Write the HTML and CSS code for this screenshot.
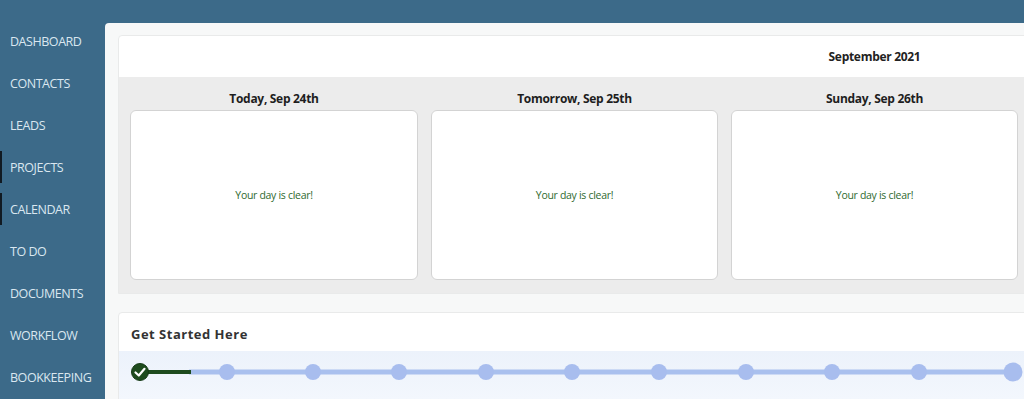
FILE: index.html
```html
<!DOCTYPE html>
<html>
<head>
<meta charset="utf-8">
<link rel="stylesheet" href="styles.css">
</head>
<body>
<div class="app">
  <nav class="sidebar">
    <a class="nav-item">DASHBOARD</a>
    <a class="nav-item">CONTACTS</a>
    <a class="nav-item">LEADS</a>
    <a class="nav-item marked">PROJECTS</a>
    <a class="nav-item marked">CALENDAR</a>
    <a class="nav-item">TO DO</a>
    <a class="nav-item">DOCUMENTS</a>
    <a class="nav-item">WORKFLOW</a>
    <a class="nav-item">BOOKKEEPING</a>
  </nav>
  <main class="main">
    <section class="cal-card">
      <div class="cal-head grid3">
        <div></div><div></div>
        <div class="month">September 2021</div>
      </div>
      <div class="cal-body">
        <div class="grid3 titles">
          <div class="day-title">Today, Sep 24th</div>
          <div class="day-title">Tomorrow, Sep 25th</div>
          <div class="day-title">Sunday, Sep 26th</div>
        </div>
        <div class="grid3">
          <div class="day-card">Your day is clear!</div>
          <div class="day-card">Your day is clear!</div>
          <div class="day-card">Your day is clear!</div>
        </div>
      </div>
    </section>
    <section class="start-card">
      <h2 class="start-title">Get Started Here</h2>
      <div class="track">
        <svg width="906" height="45" viewBox="0 0 906 45">
          <line x1="70" y1="21" x2="894" y2="21" stroke="#a9c0ee" stroke-width="5"/>
          <line x1="21" y1="21" x2="72" y2="21" stroke="#1e4b1e" stroke-width="4"/>
          <g fill="#a8bdee">
            <circle cx="108" cy="21" r="8"/>
            <circle cx="194" cy="21" r="8"/>
            <circle cx="280" cy="21" r="8"/>
            <circle cx="367" cy="21" r="8"/>
            <circle cx="453" cy="21" r="8"/>
            <circle cx="540" cy="21" r="8"/>
            <circle cx="627" cy="21" r="8"/>
            <circle cx="713" cy="21" r="8"/>
            <circle cx="800" cy="21" r="8"/>
            <circle cx="894" cy="21" r="9.5"/>
          </g>
          <circle cx="21" cy="21" r="8.5" fill="#1e4b1e" stroke="#163a16" stroke-width="1"/>
          <path d="M16.5 21.5 L19.8 24.5 L25.5 17.8" fill="none" stroke="#ffffff" stroke-width="2.2" stroke-linecap="round" stroke-linejoin="round"/>
        </svg>
      </div>
    </section>
  </main>
</div>
</body>
</html>
```

FILE: styles.css
```css
* { box-sizing: border-box; }
html, body { margin: 0; padding: 0; }
body {
  width: 1024px;
  height: 399px;
  overflow: hidden;
  background: #3c6a89;
  font-family: "Open Sans", "Liberation Sans", sans-serif;
}
.app {
  display: flex;
  height: 399px;
}
.sidebar {
  width: 105px;
  flex: none;
  padding-top: 21px;
  display: flex;
  flex-direction: column;
}
.nav-item {
  height: 42.25px;
  line-height: 42px;
  padding-left: 10px;
  color: #dae7f0;
  font-size: 12.5px;
  letter-spacing: -0.45px;
  position: relative;
}
.nav-item.marked::before {
  content: "";
  position: absolute;
  left: 0;
  top: 4px;
  bottom: 6px;
  width: 2px;
  background: #111a22;
}
.main {
  flex: 1;
  margin-top: 23px;
  background: #f7f8f8;
  border-radius: 4px 0 0 0;
  padding: 12px 0 0 13px;
  overflow: hidden;
  min-width: 0;
}
.grid3 {
  display: grid;
  grid-template-columns: 288px 287px 287px;
  column-gap: 13px;
  padding-left: 11px;
}
.cal-card {
  width: 940px;
  background: #fff;
  border: 1px solid #e9eaea;
  border-radius: 4px 4px 0 0;
}
.cal-head {
  height: 41px;
  align-items: center;
}
.month {
  text-align: center;
  font-weight: 700;
  font-size: 12px;
  color: #222;
  letter-spacing: -0.3px;
}
.cal-body {
  background: #ececec;
  padding: 12px 0 13px;
}
.titles {
  margin-bottom: 1px;
}
.day-title {
  text-align: center;
  font-weight: 700;
  font-size: 12px;
  color: #1e1e1e;
  letter-spacing: -0.3px;
  height: 20px;
  line-height: 20px;
}
.day-card {
  height: 170px;
  background: #fff;
  border: 1px solid #d3d3d3;
  border-radius: 6px;
  display: flex;
  align-items: center;
  justify-content: center;
  font-size: 10.5px;
  color: #2f6a2f;
  letter-spacing: -0.3px;
}
.start-card {
  margin-top: 18px;
  width: 940px;
  background: #fff;
  border: 1px solid #e9eaea;
  border-radius: 4px 4px 0 0;
}
.start-title {
  margin: 0;
  height: 38px;
  padding: 12px 0 0 12px;
  font-size: 13px;
  font-weight: 700;
  letter-spacing: 0.5px;
  color: #333;
  line-height: 18px;
}
.track {
  height: 48px;
  background: linear-gradient(#ecf2fb, #f3f7fd);
}
.track svg {
  display: block;
}
```
